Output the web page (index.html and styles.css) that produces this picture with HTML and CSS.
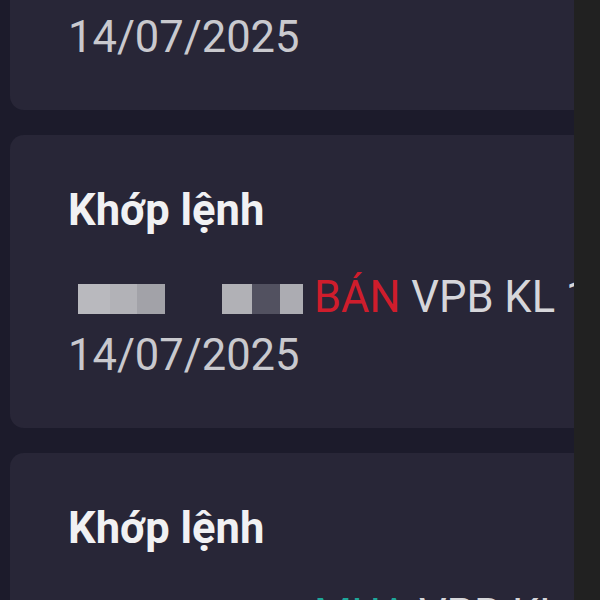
FILE: index.html
```html
<!DOCTYPE html>
<html lang="vi">
<head>
<meta charset="utf-8">
<title>Khớp lệnh</title>
<link rel="stylesheet" href="styles.css">
</head>
<body>
<div class="screen">
  <div class="list">
    <div class="card card-tail">
      <div class="date">14/07/2025</div>
    </div>
    <div class="card">
      <div class="title">Khớp lệnh</div>
      <div class="row"><span class="redact r1"></span><span class="redact r2"></span><span class="sell">BÁN</span> VPB KL 100</div>
      <div class="date">14/07/2025</div>
    </div>
    <div class="card">
      <div class="title">Khớp lệnh</div>
      <div class="row"><span class="redact r1"></span><span class="redact r2"></span><span class="buy">MUA</span> VPB KL 100</div>
      <div class="date">14/07/2025</div>
    </div>
  </div>
  <div class="rail"></div>
</div>
</body>
</html>
```
FILE: styles.css
```css
html, body {
  margin: 0;
  padding: 0;
  height: 100%;
  overflow: hidden;
  background: #1c1b2b;
  font-family: Roboto, "Noto Sans", sans-serif;
}

.screen {
  display: flex;
  height: 600px;
  overflow: hidden;
}

.list {
  flex: 1;
  min-width: 0;
  padding-left: 10px;
  margin-top: -20px;
  display: flex;
  flex-direction: column;
  gap: 25px;
  overflow: hidden;
}

.rail {
  width: 26px;
  flex: none;
  background: #212121;
}

.card {
  background: #282637;
  border-radius: 14px;
  padding: 47px 0 43px 58px;
  margin-right: -30px;
  height: 293px;
  box-sizing: border-box;
  flex: none;
}

.card-tail {
  height: 130px;
  padding-top: 29px;
}

.title {
  font-size: 43.5px;
  font-weight: 700;
  line-height: 58px;
  color: #f1f1f3;
}

.row {
  margin-top: 29px;
  font-size: 43.5px;
  line-height: 58px;
  color: #d6d6da;
  white-space: nowrap;
  overflow: hidden;
}

.redact {
  display: inline-block;
  height: 30px;
  vertical-align: -2px;
}

.r1 {
  width: 87px;
  margin-left: 10px;
  margin-right: 57px;
  background: linear-gradient(to right, #b9b9be 0 37%, #b2b2b7 37% 68%, #a2a2a8 68% 100%);
}

.r2 {
  width: 81px;
  margin-right: 11px;
  background: linear-gradient(to right, #b1b1b6 0 37%, #525160 37% 71%, #acacb2 71% 100%);
}

.sell {
  color: #cf1d2c;
}

.buy {
  color: #1ea79a;
}

.date {
  font-size: 43.5px;
  line-height: 58px;
  color: #c9c9ce;
}
```
